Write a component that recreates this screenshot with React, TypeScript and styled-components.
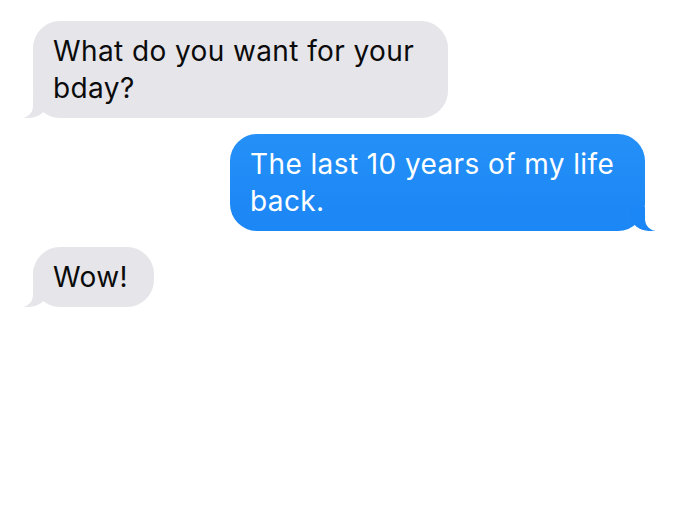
import * as React from "react";
import styled, { createGlobalStyle, css } from "styled-components";

const Global = createGlobalStyle`
	html, body {
		margin: 0;
		padding: 0;
		background: #ffffff;
	}
	body {
		font-family: "Inter", "Liberation Sans", Arial, sans-serif;
		-webkit-font-smoothing: antialiased;
	}
`;

const colors = {
	grey: "#e5e5ea",
	blue: "#1f8af6",
	black: "#0b0b0b",
	white: "#ffffff",
};

const Thread = styled.div`
	display: flex;
	flex-direction: column;
	align-items: flex-start;
	gap: 16px;
	padding: 21px 55px 0 33px;
	width: 700px;
	height: 520px;
	box-sizing: border-box;
	background: ${colors.white};
`;

const Bubble = styled.div<{ $me?: boolean }>`
	position: relative;
	box-sizing: border-box;
	max-width: 415px;
	padding: 11.5px 26px 11.5px 20px;
	border-radius: 27px;
	font-size: 28px;
	line-height: 37px;
	letter-spacing: 0.4px;
	background: ${colors.grey};
	color: ${colors.black};

	&::before, &::after {
		content: "";
		position: absolute;
		bottom: 0;
		height: 24px;
	}
	&::before {
		left: -10px;
		width: 24px;
		background: ${colors.grey};
		border-bottom-right-radius: 18px 15px;
	}
	&::after {
		left: -24px;
		width: 24px;
		background: ${colors.white};
		border-bottom-right-radius: 12px;
	}

	${(p) => p.$me && css`
		align-self: flex-end;
		padding: 11.5px 20px 11.5px 20px;
		background: linear-gradient(180deg, #2490f7 0%, #1b86f5 100%);
		color: ${colors.white};
		&::before {
			left: auto;
			right: -10px;
			background: #1b86f5;
			border-bottom-right-radius: 0;
			border-bottom-left-radius: 18px 15px;
		}
		&::after {
			left: auto;
			right: -24px;
			border-bottom-right-radius: 0;
			border-bottom-left-radius: 12px;
		}
	`}
`;

const messages = [
	{ me: false, text: "What do you want for your bday?" },
	{ me: true, text: "The last 10 years of my life back." },
	{ me: false, text: "Wow!" },
];

export default function App() {
	return (
		<>
			<Global />
			<Thread>
				{messages.map((m, i) => (
					<Bubble key={i} $me={m.me}>{m.text}</Bubble>
				))}
			</Thread>
		</>
	);
}
